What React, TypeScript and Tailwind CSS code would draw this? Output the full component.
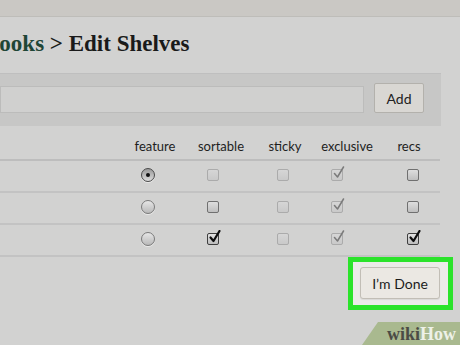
import React from "react";

type Box = "off" | "offDim" | "on" | "onDim";

const shelves: { feature: boolean; cells: Box[] }[] = [
  { feature: true, cells: ["offDim", "offDim", "onDim", "off"] },
  { feature: false, cells: ["off", "offDim", "onDim", "off"] },
  { feature: false, cells: ["on", "offDim", "onDim", "on"] },
];

// left offset of each 50px cell, so control centres land on the columns
const cellGaps = ["ml-[15px]", "ml-[20px]", "ml-[4px]", "ml-[26px]"];

function Radio({ checked }: { checked: boolean }) {
  return (
    <div
      className={
        "flex h-[14px] w-[14px] items-center justify-center rounded-full border bg-gradient-to-b shadow-[0_1px_0_rgba(255,255,255,0.5)] " +
        (checked
          ? "border-[#4a4a4a] from-[#9a9a9a] to-[#dcdcdc]"
          : "border-[#7a7a7a] from-[#e6e6e6] to-[#b9b9b9]")
      }
    >
      {checked && <div className="h-[4px] w-[4px] rounded-full bg-[#111]" />}
    </div>
  );
}

function Check({ state }: { state: Box }) {
  const dim = state === "offDim" || state === "onDim";
  const ticked = state === "on" || state === "onDim";
  return (
    <div
      className={
        "relative h-[12px] w-[12px] rounded-[2px] border bg-gradient-to-b " +
        (dim
          ? "border-[#ababab] from-[#d6d6d6] to-[#c9c9c9]"
          : state === "on"
            ? "border-[#3e3e3e] from-[#e2e2e2] to-[#bdbdbd]"
            : "border-[#707070] from-[#dedede] to-[#bfbfbf]")
      }
    >
      {ticked && (
        <svg
          viewBox="0 0 14 14"
          className="absolute left-[0px] top-[-4px] h-[14px] w-[14px]"
        >
          <path
            d="M2.5 7.5 L5.5 11 L11.5 1"
            fill="none"
            stroke={state === "on" ? "#0d0d0d" : "#7a7a7a"}
            strokeWidth={state === "on" ? 2.2 : 1.5}
            strokeLinecap="round"
            strokeLinejoin="round"
          />
        </svg>
      )}
    </div>
  );
}

export default function App() {
  return (
    <main
      className="relative h-[345px] w-[460px] overflow-hidden bg-[#d2d2d1] text-[#1c1c1c]"
      style={{ fontFamily: "Lato, 'Open Sans', sans-serif" }}
    >
      <div className="h-[17px] border-b border-[#bebdb9] bg-[#cac8c4]" />

      <div className="h-[56px] pt-[14px]">
        <h1
          className="ml-[-16px] whitespace-nowrap text-[23px] font-bold leading-[25px] text-[#1a1a1a]"
          style={{ fontFamily: "'Liberation Serif', serif" }}
        >
          <span className="text-[#1f4636]">Books</span> &gt; Edit Shelves
        </h1>
      </div>

      <div className="flex h-[53px] w-[441px] items-start border-t border-[#bfbfbf] bg-[#c7c7c6] pt-[9px]">
        <div className="mt-[3px] h-[27px] w-[364px] border border-[#bcbcbb] bg-[#d0d0cf]" />
        <button className="ml-[10px] h-[30px] w-[50px] rounded-[2px] border border-[#b3b1ac] bg-[#d9d7d3] text-[14px] text-[#222]">
          Add
        </button>
      </div>

      <div className="w-[440px]">
        <div className="flex h-[35px] items-end border-b-2 border-[#bdbdbd] pb-[3px] text-[13px] text-[#1e1e1e]">
          <div className="w-[122px]" />
          <div className="w-[66px] text-center">feature</div>
          <div className="w-[66px] text-center">sortable</div>
          <div className="w-[62px] text-center">sticky</div>
          <div className="w-[62px] text-center">exclusive</div>
          <div className="w-[62px] text-center">recs</div>
        </div>

        {shelves.map((row, i) => (
          <div
            key={i}
            className="flex h-[32px] items-center border-b-2 border-[#c3c3c3] pb-[2px]"
          >
            <div className="ml-[123px] flex w-[50px] justify-center">
              <Radio checked={row.feature} />
            </div>
            {row.cells.map((c, j) => (
              <div key={j} className={"flex w-[50px] justify-center " + cellGaps[j]}>
                <Check state={c} />
              </div>
            ))}
          </div>
        ))}
      </div>

      <div className="flex justify-end pr-[7px]">
        <div className="flex h-[53px] w-[105px] border-[5px] border-[#2be32b] bg-[#ecebe9] pl-[7px] pt-[5px]">
          <button className="h-[32px] w-[80px] rounded-[3px] border border-[#c2beb6] bg-[#ebe8e3] text-[14px] text-[#1c1c1c] shadow-[0_1px_1px_rgba(0,0,0,0.08)]">
            I’m Done
          </button>
        </div>
      </div>

      <div
        className="absolute bottom-0 right-0 flex h-[23px] w-[98px] items-center justify-end bg-[#a9b98f] pr-[4px] [clip-path:polygon(16px_0,100%_0,100%_100%,0_100%)]"
        style={{ fontFamily: "'Liberation Serif', serif" }}
      >
        <span className="text-[18px] font-bold leading-none text-[#4b4b45]">wiki</span>
        <span className="text-[18px] font-bold leading-none text-[#eef1e8]">How</span>
      </div>
    </main>
  );
}
